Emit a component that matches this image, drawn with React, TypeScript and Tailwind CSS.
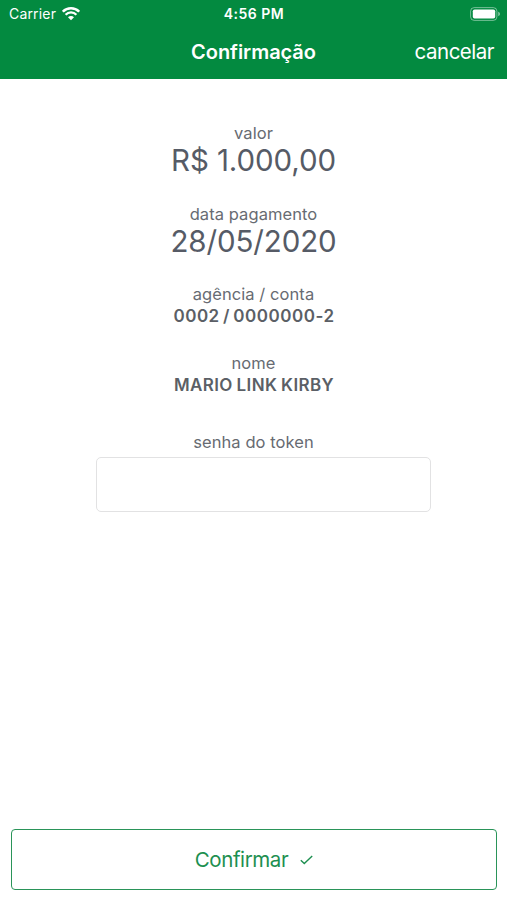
import { useState } from "react";

const WifiIcon = () => (
  <svg width="18" height="14" viewBox="0 0 18 14" fill="none" stroke="white">
    <path d="M0.8 4.7 A11.6 11.6 0 0 1 17.2 4.7" strokeWidth="2.6" />
    <path d="M3.6 7.7 A7.6 7.6 0 0 1 14.4 7.7" strokeWidth="2.3" />
    <path d="M9 13.2 L6 10.2 A4.2 4.2 0 0 1 12 10.2 Z" fill="white" stroke="none" />
  </svg>
);

const BatteryIcon = () => (
  <svg width="31" height="14" viewBox="0 0 31 14" fill="none">
    <rect x="0.6" y="0.6" width="26.3" height="12.8" rx="3.6" stroke="white" strokeOpacity="0.45" strokeWidth="1" />
    <rect x="2.8" y="2.4" width="22.4" height="9.2" rx="1.8" fill="white" />
    <path d="M28.2 4.8 C30.6 5.5 30.6 8.5 28.2 9.2 Z" fill="white" fillOpacity="0.5" />
  </svg>
);

const CheckIcon = () => (
  <svg width="13" height="10" viewBox="0 0 13 10" fill="none" stroke="currentColor" strokeWidth="1.4">
    <path d="M0.8 5.2 L4.3 8.5 L12.2 0.9" />
  </svg>
);

export default function App() {
  const [token, setToken] = useState("");

  return (
    <div className="flex h-[900px] w-[507px] flex-col bg-white font-['Inter',sans-serif] text-[#676b72]">
      <header className="h-[79px] bg-[#038a40] text-white">
        <div className="grid h-[27px] grid-cols-3 items-center">
          <div className="flex items-center gap-[6px] pl-[9px]">
            <span className="text-[14px] leading-[27px] tracking-[0.18px]">Carrier</span>
            <WifiIcon />
          </div>
          <span className="pl-[1px] text-center text-[14px] leading-[27px] font-semibold tracking-[0.5px]">4:56 PM</span>
          <div className="flex justify-end pr-[6px]">
            <BatteryIcon />
          </div>
        </div>
        <div className="grid h-[50px] grid-cols-3 items-center">
          <h1 className="col-start-2 text-center text-[20px] font-semibold tracking-[-0.05px]">Confirmação</h1>
          <button className="pr-[13px] text-right text-[20.5px] tracking-[-0.5px]">cancelar</button>
        </div>
      </header>

      <main className="flex flex-1 flex-col items-center pt-[43px] text-center text-[16.5px] leading-[22px] tracking-[0.07px]">
        <section className="mb-[27px]">
          <p>valor</p>
          <p className="text-[29.5px] leading-[32px] tracking-[-0.1px] text-[#565b66]">R$ 1.000,00</p>
        </section>
        <section className="mb-[26px]">
          <p>data pagamento</p>
          <p className="text-[29.5px] leading-[32px] tracking-[-0.1px] text-[#565b66]">28/05/2020</p>
        </section>
        <section className="mb-[25px]">
          <p>agência / conta</p>
          <p className="pl-[1px] text-[17px] font-semibold tracking-[0.52px] [word-spacing:-1.5px] text-[#5b5f66]">0002 / 0000000-2</p>
        </section>
        <section className="mb-[35px]">
          <p>nome</p>
          <p className="pl-[1px] text-[17px] font-semibold tracking-[0.35px] [word-spacing:-0.7px] text-[#5b5f66]">MARIO LINK KIRBY</p>
        </section>
        <label htmlFor="token">senha do token</label>
        <input
          id="token"
          type="password"
          value={token}
          onChange={(e) => setToken(e.target.value)}
          className="mt-[4px] ml-[20px] h-[55px] w-[335px] rounded-[5px] border border-[#e2e2e3] px-3 outline-none"
        />
      </main>

      <footer className="pr-[10px] pb-[10px] pl-[11px]">
        <button className="flex h-[61px] w-full items-center justify-center gap-[12px] rounded-[4px] border border-[#2a9459] text-[20.5px] tracking-[-0.4px] text-[#1d8f50]">
          <span className="pt-[2px]">Confirmar</span>
          <CheckIcon />
        </button>
      </footer>
    </div>
  );
}
